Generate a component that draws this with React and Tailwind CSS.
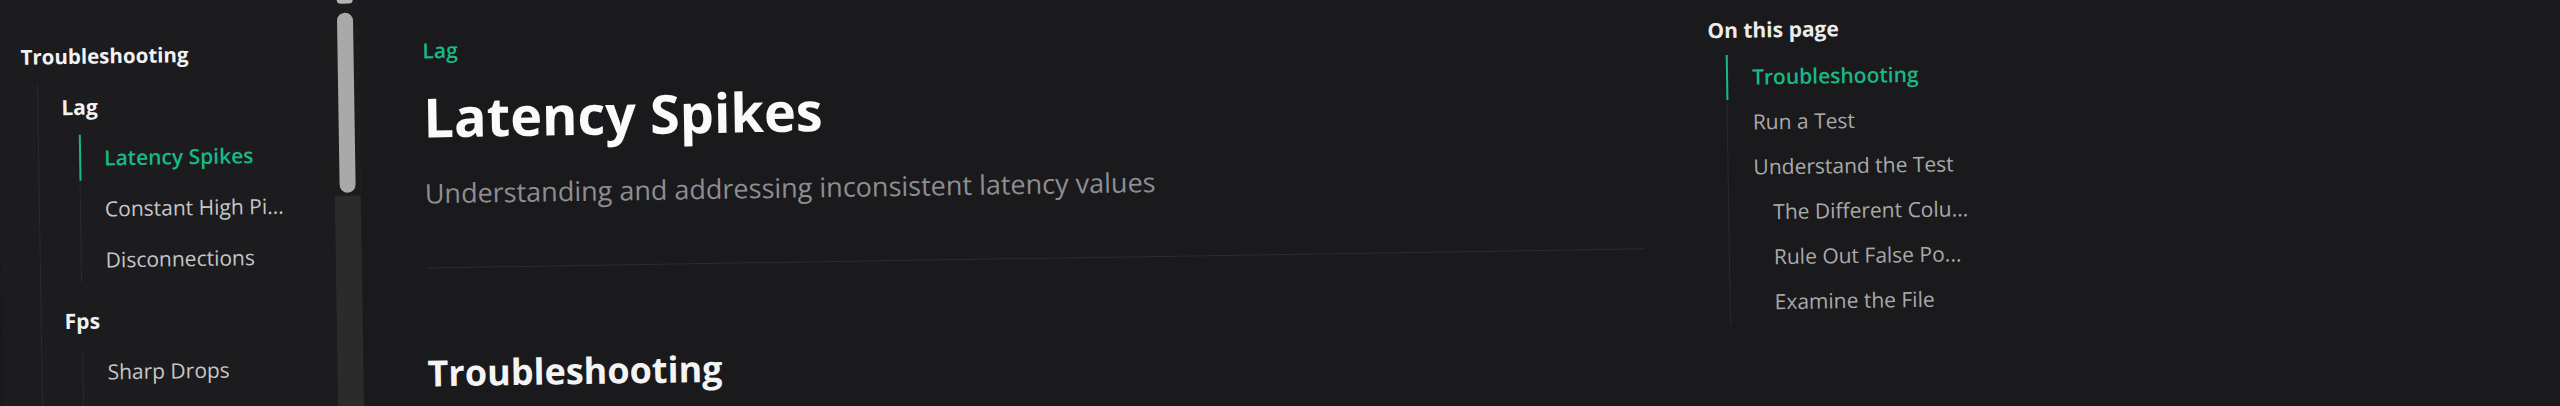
const sidebarGroups = [
  {
    title: "Lag",
    items: ["Latency Spikes", "Constant High Pi...", "Disconnections"],
    active: "Latency Spikes",
  },
  { title: "Fps", items: ["Sharp Drops"] },
];

const outline = [
  { label: "Troubleshooting", depth: 0, active: true },
  { label: "Run a Test", depth: 0 },
  { label: "Understand the Test", depth: 0 },
  { label: "The Different Colu...", depth: 1 },
  { label: "Rule Out False Po...", depth: 1 },
  { label: "Examine the File", depth: 1 },
];

const Sidebar = () => (
  <aside className="w-[335px] shrink-0 bg-[#1c1c1e] pl-[23px] pt-[54px]">
    <div className="h-[46px] text-[20.5px] leading-[46px] font-bold text-[#f2f2f2]">Troubleshooting</div>
    <div className="mt-[5px] ml-[16px] h-[500px] border-l border-[#2a2a2c] pl-[23px]">
      {sidebarGroups.map((group, i) => (
        <div key={group.title} className={i > 0 ? "mt-[15px]" : ""}>
          <div className="h-[46px] text-[21px] leading-[46px] font-bold text-[#f2f2f2]">{group.title}</div>
          <div className="mt-[5px] ml-[17px] flex flex-col gap-[5px] border-l border-[#2a2a2c] pl-[24px]">
            {group.items.map((item) => (
              <div
                key={item}
                className={
                  "relative h-[46px] whitespace-nowrap text-[21px] leading-[46px] " +
                  (item === group.active ? "font-semibold text-[#19b887]" : "font-medium text-[#c6c6c8]")
                }
              >
                {item === group.active && (
                  <span className="absolute top-0 left-[-25px] h-[46px] w-[2px] bg-[#19b887]" />
                )}
                {item}
              </div>
            ))}
            {i === sidebarGroups.length - 1 && <div className="h-[80px]" />}
          </div>
        </div>
      ))}
    </div>
  </aside>
);

const Scrollbar = () => (
  <div className="flex w-[26px] shrink-0 flex-col bg-[#2b2b2b]">
    <div className="flex flex-col items-center bg-[#1c1c1e] pb-[3px]">
      <div className="h-[29px] w-[16px] rounded-b-[4px] bg-[#b4b4b4]" />
      <div className="mt-[9px] h-[180px] w-[16px] rounded-full bg-[#a9a9a9]" />
    </div>
  </div>
);

const Outline = () => (
  <div className="w-[320px] shrink-0 pt-[61px]">
    <div className="h-[32px] text-[21px] leading-[32px] font-bold text-[#ececec]">On this page</div>
    <div className="relative mt-[9px] ml-[18px] border-l border-[#2a2a2c] pl-[25px]">
      <span className="absolute top-0 left-[-1px] h-[45px] w-[2px] bg-[#19b887]" />
      {outline.map((item) => (
        <div
          key={item.label}
          className={
            "h-[45px] whitespace-nowrap text-[21px] leading-[45px] " +
            (item.depth === 1 ? "pl-[19px] " : "") +
            (item.active ? "font-semibold text-[#19b887]" : "font-medium text-[#a9a9ab]")
          }
        >
          {item.label}
        </div>
      ))}
    </div>
  </div>
);

const Main = () => (
  <main className="w-[1349px] shrink-0 pl-[64px] pt-[63px]">
    <div className="w-[1220px]">
      <p className="h-[28px] text-[21px] leading-[28px] font-semibold text-[#19b887]">Lag</p>
      <h1 className="mt-[20px] h-[64px] text-[54px] leading-[64px] font-bold text-[#fafafa]">Latency Spikes</h1>
      <p className="mt-[25px] h-[40px] text-[27px] leading-[40px] text-[#8e8e92]">
        Understanding and addressing inconsistent latency values
      </p>
      <div className="mt-[54px] h-px bg-[#2c2c2e]" />
      <h2 className="mt-[81px] h-[48px] text-[36px] leading-[48px] font-bold text-[#f4f4f4]">Troubleshooting</h2>
    </div>
  </main>
);

export default function App() {
  return (
    <div className="h-[406px] w-[2560px] overflow-hidden bg-[#1a1a1c] font-['Open_Sans',sans-serif]">
      <div className="-mt-[40px] flex h-[486px] w-[2560px] -rotate-[0.9deg] bg-[#1a1a1c]">
        <Sidebar />
        <Scrollbar />
        <Main />
        <Outline />
      </div>
    </div>
  );
}
